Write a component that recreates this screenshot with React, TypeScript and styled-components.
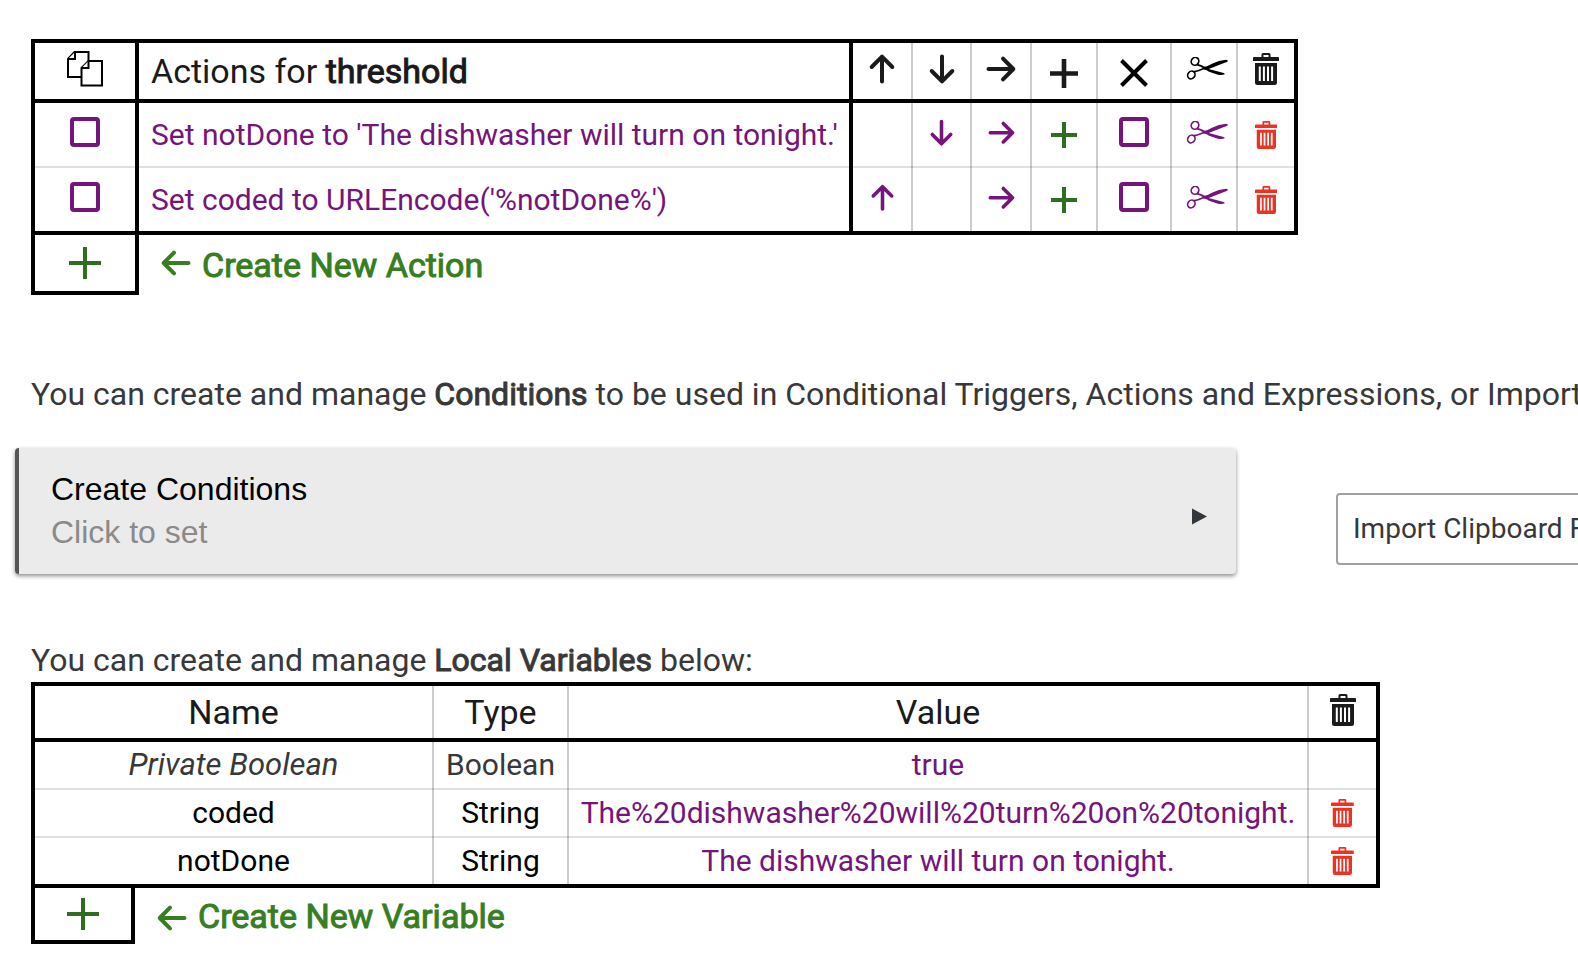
import React from 'react';
import styled, { createGlobalStyle } from 'styled-components';

const Global = createGlobalStyle`
  *, *::before, *::after { box-sizing: border-box; }
  body { margin: 0; background: #fff; overflow-x: hidden; font-family: Roboto, sans-serif; color: #383838; }
`;

const PURPLE = '#75147c';
const GREEN = '#377e22';
const DARK_GREEN = '#2f6e1e';
const RED = '#ea3323';
const INK = '#1a1a1a';

const Page = styled.main`
  padding: 39px 0 20px 31px;
  white-space: nowrap;
`;

const Bold = styled.b`
  font-weight: 400;
  -webkit-text-stroke: 1px currentColor;
`;

const Grid = styled.table<{ $width: number }>`
  table-layout: fixed;
  width: ${(p) => p.$width}px;
  border-collapse: separate;
  border-spacing: 0;
  border: solid #000;
  border-width: 4px 4px 0;
`;

/* The row rule is a background strip, so the column rules run across it unbroken. */
const Row = styled.tr<{ $height: number; $heavy?: boolean }>`
  height: ${(p) => p.$height}px;
  > * {
    padding: 0 0 ${(p) => (p.$heavy ? 4 : 2)}px;
    background: linear-gradient(${(p) => (p.$heavy ? '#000, #000' : '#e0e0e0, #e0e0e0')})
      bottom / 100% ${(p) => (p.$heavy ? 4 : 2)}px no-repeat border-box;
  }
`;

type Edge = 'none' | 'thin' | 'heavy';
const edges = { none: '0', thin: '2px solid rgba(0, 0, 0, 0.2)', heavy: '4px solid #000' };

const Head = styled.th<{ $edge?: Edge; $left?: boolean }>`
  border-left: ${(p) => edges[p.$edge ?? 'thin']};
  text-align: ${(p) => (p.$left ? 'left' : 'center')};
  text-indent: ${(p) => (p.$left ? 12 : 0)}px;
  font-size: 34px;
  font-weight: 400;
  line-height: ${(p) => (p.$left ? 42 : 40)}px;
  color: ${INK};
`;

const Cell = styled.td<{ $edge?: Edge; $left?: boolean; $tone?: string; $italic?: boolean }>`
  border-left: ${(p) => edges[p.$edge ?? 'thin']};
  text-align: ${(p) => (p.$left ? 'left' : 'center')};
  text-indent: ${(p) => (p.$left ? 12 : 0)}px;
  font-size: ${(p) => (p.$italic ? 31 : 30)}px;
  line-height: 36px;
  color: ${(p) => p.$tone ?? '#000'};
  font-style: ${(p) => (p.$italic ? 'italic' : 'normal')};
`;

const PlainButton = styled.button`
  display: flex;
  align-items: center;
  justify-content: center;
  margin: 0 auto;
  padding: 0;
  border: 0;
  background: none;
  color: inherit;
  font: inherit;
  cursor: pointer;
`;

const ActionLink = styled(PlainButton)`
  margin: 0;
  text-indent: 12px;
`;

const Tick = styled.input`
  appearance: none;
  display: block;
  width: 30px;
  height: 30px;
  margin: 0 auto 6px;
  border: 4px solid ${PURPLE};
  border-radius: 4px;
  background: #fff;
`;

const Svg = styled.svg`
  display: block;
  margin: 0 auto;
`;

const CreateRow = styled.div`
  display: flex;
  align-items: stretch;
`;

const CreateBox = styled(PlainButton)<{ $width: number; $height: number }>`
  width: ${(p) => p.$width}px;
  height: ${(p) => p.$height}px;
  margin: 0;
  border: solid #000;
  border-width: 0 4px 4px;
`;

const CreateLabel = styled.div`
  display: flex;
  align-items: center;
  gap: 2px;
  padding-left: 13px;
  color: ${GREEN};
  font-size: 34px;
  line-height: 40px;
`;

const Intro = styled.p`
  margin: 0;
  font-size: 32px;
  line-height: 40px;
`;

const ConditionsIntro = styled(Intro)`
  margin-top: 79px;
  overflow: hidden;
`;

const ConditionsRow = styled.section`
  display: flex;
  align-items: flex-end;
  gap: 100px;
  margin: 34px 0 66px -16px;
`;

const VariablesIntro = styled(Intro)`
  padding-bottom: 2px;
`;

const Panel = styled.button`
  display: flex;
  align-items: center;
  justify-content: space-between;
  flex: 0 0 1221px;
  height: 126px;
  padding: 0 29px 0 32px;
  border: 0;
  border-left: 4px solid #555;
  border-radius: 4px;
  background: #ebebeb;
  box-shadow: 0 2px 4px rgba(0, 0, 0, 0.45);
  font-family: "Liberation Sans", Arial, sans-serif;
  font-size: 32px;
  line-height: 43px;
  text-align: left;
  color: #000;
`;

const Hint = styled.span`
  display: block;
  color: #8a8a8a;
`;

const ImportButton = styled.button`
  flex: none;
  height: 72px;
  margin-bottom: 9px;
  padding: 0 15px;
  border: 2px solid #a0a0a0;
  border-radius: 4px;
  background: #fff;
  font: 28px/32px Roboto, sans-serif;
  color: #383838;
`;

type IconProps = { size?: number; color?: string };

const turns = { up: 0, right: 90, down: 180, left: 270 };
const Arrow = ({ dir, size = 48, color = INK, cy = 22 }: IconProps & { dir: keyof typeof turns; cy?: number }) => (
  <Svg width={size} height={size} viewBox="0 0 48 48" aria-hidden>
    <g transform={`translate(24 ${cy}) rotate(${turns[dir]})`} fill="none" stroke={color} strokeWidth="4" strokeLinecap="round" strokeLinejoin="round">
      <path d="M0 12.5V-12M-10.3 -2L0 -12.3L10.3 -2" />
    </g>
  </Svg>
);

const Plus = ({ size = 26, color = DARK_GREEN }: IconProps) => (
  <Svg width={size} height={size} viewBox={`0 0 ${size} ${size}`} aria-hidden>
    <path d={`M${size / 2} 0V${size}M0 ${size / 2}H${size}`} stroke={color} strokeWidth="4" />
  </Svg>
);

const HeadPlus = () => (
  <Svg width="28" height="34" viewBox="0 0 28 34" aria-hidden>
    <path d="M14 5V34M0 19.500H28" stroke={INK} strokeWidth="4.600" />
  </Svg>
);

const Cross = () => (
  <Svg width="30" height="34" viewBox="0 0 30 34" aria-hidden>
    <path d="M2.500 6.500L27.500 31.500M27.500 6.500L2.500 31.500" stroke="#000" strokeWidth="4" />
  </Svg>
);

const Scissors = ({ color = '#000' }: IconProps) => (
  <Svg width="48" height="28" viewBox="-20 2 144 84" aria-hidden>
    <g fill="none" stroke={color} strokeWidth="5">
      <ellipse cx="25" cy="15" rx="11" ry="12" transform="rotate(35 25 15)" />
      <ellipse cx="14" cy="56" rx="12" ry="10.500" transform="rotate(-50 14 56)" />
      <path d="M31 25Q42 28 56 35M22 46Q34 44 56 35" />
    </g>
    <path fill={color} d="M44 34Q62 31 76 22Q96 12 118 10.500Q124 11 124 14Q122 17 114 19L66 38L111 50Q116 52 114 54Q106 58 94 55Q70 49 60 42Q52 41 44 34Z" />
  </Svg>
);

const Trash = ({ size = 28, color = RED }: IconProps) => (
  <Svg width={(size * 26) / 32} height={size} viewBox="0 0 26 32" aria-hidden>
    <path fill={color} d="M8.500 4V1.500Q8.500 0 10 0H16Q17.500 0 17.500 1.500V4H25Q26 4 26 5V8H0V5Q0 4 1 4ZM10.500 2V4H15.500V2Z" fillRule="evenodd" />
    <path fill={color} d="M2 10H24V29.500Q24 32 21.500 32H4.500Q2 32 2 29.500ZM5.800 13.500V28H7.800V13.500ZM9.900 13.500V28H11.900V13.500ZM14 13.500V28H16V13.500ZM18.100 13.500V28H20.100V13.500Z" fillRule="evenodd" />
  </Svg>
);

const HeadIcon = styled.div`
  padding-bottom: 4px;
`;

const Copy = () => (
  <Svg width="36" height="36" viewBox="0 0 36 36" aria-hidden>
    <g fill="#fff" stroke="#000" strokeWidth="2">
      <path d="M7.500 1H21.500V26H1V8Z" />
      <path d="M8 1V8H1" />
      <path d="M21.500 10H35V34.500H14.500V17Z" />
      <path d="M21.500 10V17H14.500" />
    </g>
  </Svg>
);

const Triangle = () => (
  <svg width="15" height="28" viewBox="0 0 15 28" aria-hidden>
    <path d="M0 11.500L15 19.500L0 27.500Z" fill="#33373b" />
  </svg>
);

const actions = [
  { text: "Set notDone to 'The dishwasher will turn on tonight.'", up: false, down: true },
  { text: "Set coded to URLEncode('%notDone%')", up: true, down: false },
];

const variables = [
  { name: 'Private Boolean', type: 'Boolean', value: 'true', builtIn: true },
  { name: 'coded', type: 'String', value: 'The%20dishwasher%20will%20turn%20on%20tonight.' },
  { name: 'notDone', type: 'String', value: 'The dishwasher will turn on tonight.' },
];

const Columns = ({ widths }: { widths: number[] }) => (
  <colgroup>{widths.map((w, i) => <col key={i} width={w} />)}</colgroup>
);

export default function App() {
  return (
    <>
      <Global />
      <Page>
        <Grid $width={1267}>
          <Columns widths={[100, 714, 62, 59, 60, 66, 74, 66, 58]} />
          <thead>
            <Row $height={60} $heavy>
              <Head $edge="none"><HeadIcon><Copy /></HeadIcon></Head>
              <Head $edge="heavy" $left>Actions for <Bold>threshold</Bold></Head>
              <Head $edge="heavy"><Arrow dir="up" /></Head>
              <Head><Arrow dir="down" /></Head>
              <Head><Arrow dir="right" /></Head>
              <Head><HeadPlus /></Head>
              <Head><Cross /></Head>
              <Head><Scissors /></Head>
              <Head><HeadIcon><Trash size={32} color={INK} /></HeadIcon></Head>
            </Row>
          </thead>
          <tbody>
            {actions.map((a, i) => {
              const last = i === actions.length - 1;
              return (
                <Row key={a.text} $height={last ? 67 : 65} $heavy={last}>
                  <Cell $edge="none"><Tick type="checkbox" aria-label={`Select ${a.text}`} /></Cell>
                  <Cell $edge="heavy" $tone={PURPLE}><ActionLink>{a.text}</ActionLink></Cell>
                  <Cell $edge="heavy">{a.up && <PlainButton aria-label="Move up"><Arrow dir="up" size={43} color={PURPLE} /></PlainButton>}</Cell>
                  <Cell>{a.down && <PlainButton aria-label="Move down"><Arrow dir="down" size={43} color={PURPLE} /></PlainButton>}</Cell>
                  <Cell><PlainButton aria-label="Indent"><Arrow dir="right" size={43} color={PURPLE} /></PlainButton></Cell>
                  <Cell><PlainButton aria-label="Insert"><Plus /></PlainButton></Cell>
                  <Cell><Tick type="checkbox" aria-label={`Disable ${a.text}`} /></Cell>
                  <Cell><PlainButton aria-label="Cut"><Scissors color={PURPLE} /></PlainButton></Cell>
                  <Cell><PlainButton aria-label="Delete"><Trash /></PlainButton></Cell>
                </Row>
              );
            })}
          </tbody>
        </Grid>
        <CreateRow>
          <CreateBox $width={108} $height={60} aria-label="Create action"><Plus size={32} /></CreateBox>
          <CreateLabel><Arrow dir="left" color={GREEN} /><Bold>Create New Action</Bold></CreateLabel>
        </CreateRow>

        <ConditionsIntro>
          You can create and manage <Bold>Conditions</Bold> to be used in Conditional Triggers, Actions and Expressions, or Import
        </ConditionsIntro>

        <ConditionsRow>
          <Panel>
            <span>Create Conditions<Hint>Click to set</Hint></span>
            <Triangle />
          </Panel>
          <ImportButton>Import Clipboard F</ImportButton>
        </ConditionsRow>

        <VariablesIntro>You can create and manage <Bold>Local Variables</Bold> below:</VariablesIntro>
        <Grid $width={1349}>
          <Columns widths={[397, 135, 740, 69]} />
          <thead>
            <Row $height={56} $heavy>
              <Head $edge="none">Name</Head>
              <Head>Type</Head>
              <Head>Value</Head>
              <Head><HeadIcon><Trash size={32} color={INK} /></HeadIcon></Head>
            </Row>
          </thead>
          <tbody>
            {variables.map((v, i) => {
              const last = i === variables.length - 1;
              return (
                <Row key={v.name} $height={last ? 50 : 48} $heavy={last}>
                  <Cell $edge="none" $italic={v.builtIn} $tone={v.builtIn ? '#383838' : undefined}>{v.name}</Cell>
                  <Cell $tone={v.builtIn ? '#383838' : undefined}>{v.type}</Cell>
                  <Cell $tone={PURPLE}><PlainButton>{v.value}</PlainButton></Cell>
                  <Cell>{!v.builtIn && <PlainButton aria-label={`Delete ${v.name}`}><Trash /></PlainButton>}</Cell>
                </Row>
              );
            })}
          </tbody>
        </Grid>
        <CreateRow>
          <CreateBox $width={104} $height={56} aria-label="Create variable"><Plus size={32} /></CreateBox>
          <CreateLabel><Arrow dir="left" color={GREEN} cy={26} /><Bold>Create New Variable</Bold></CreateLabel>
        </CreateRow>
      </Page>
    </>
  );
}
